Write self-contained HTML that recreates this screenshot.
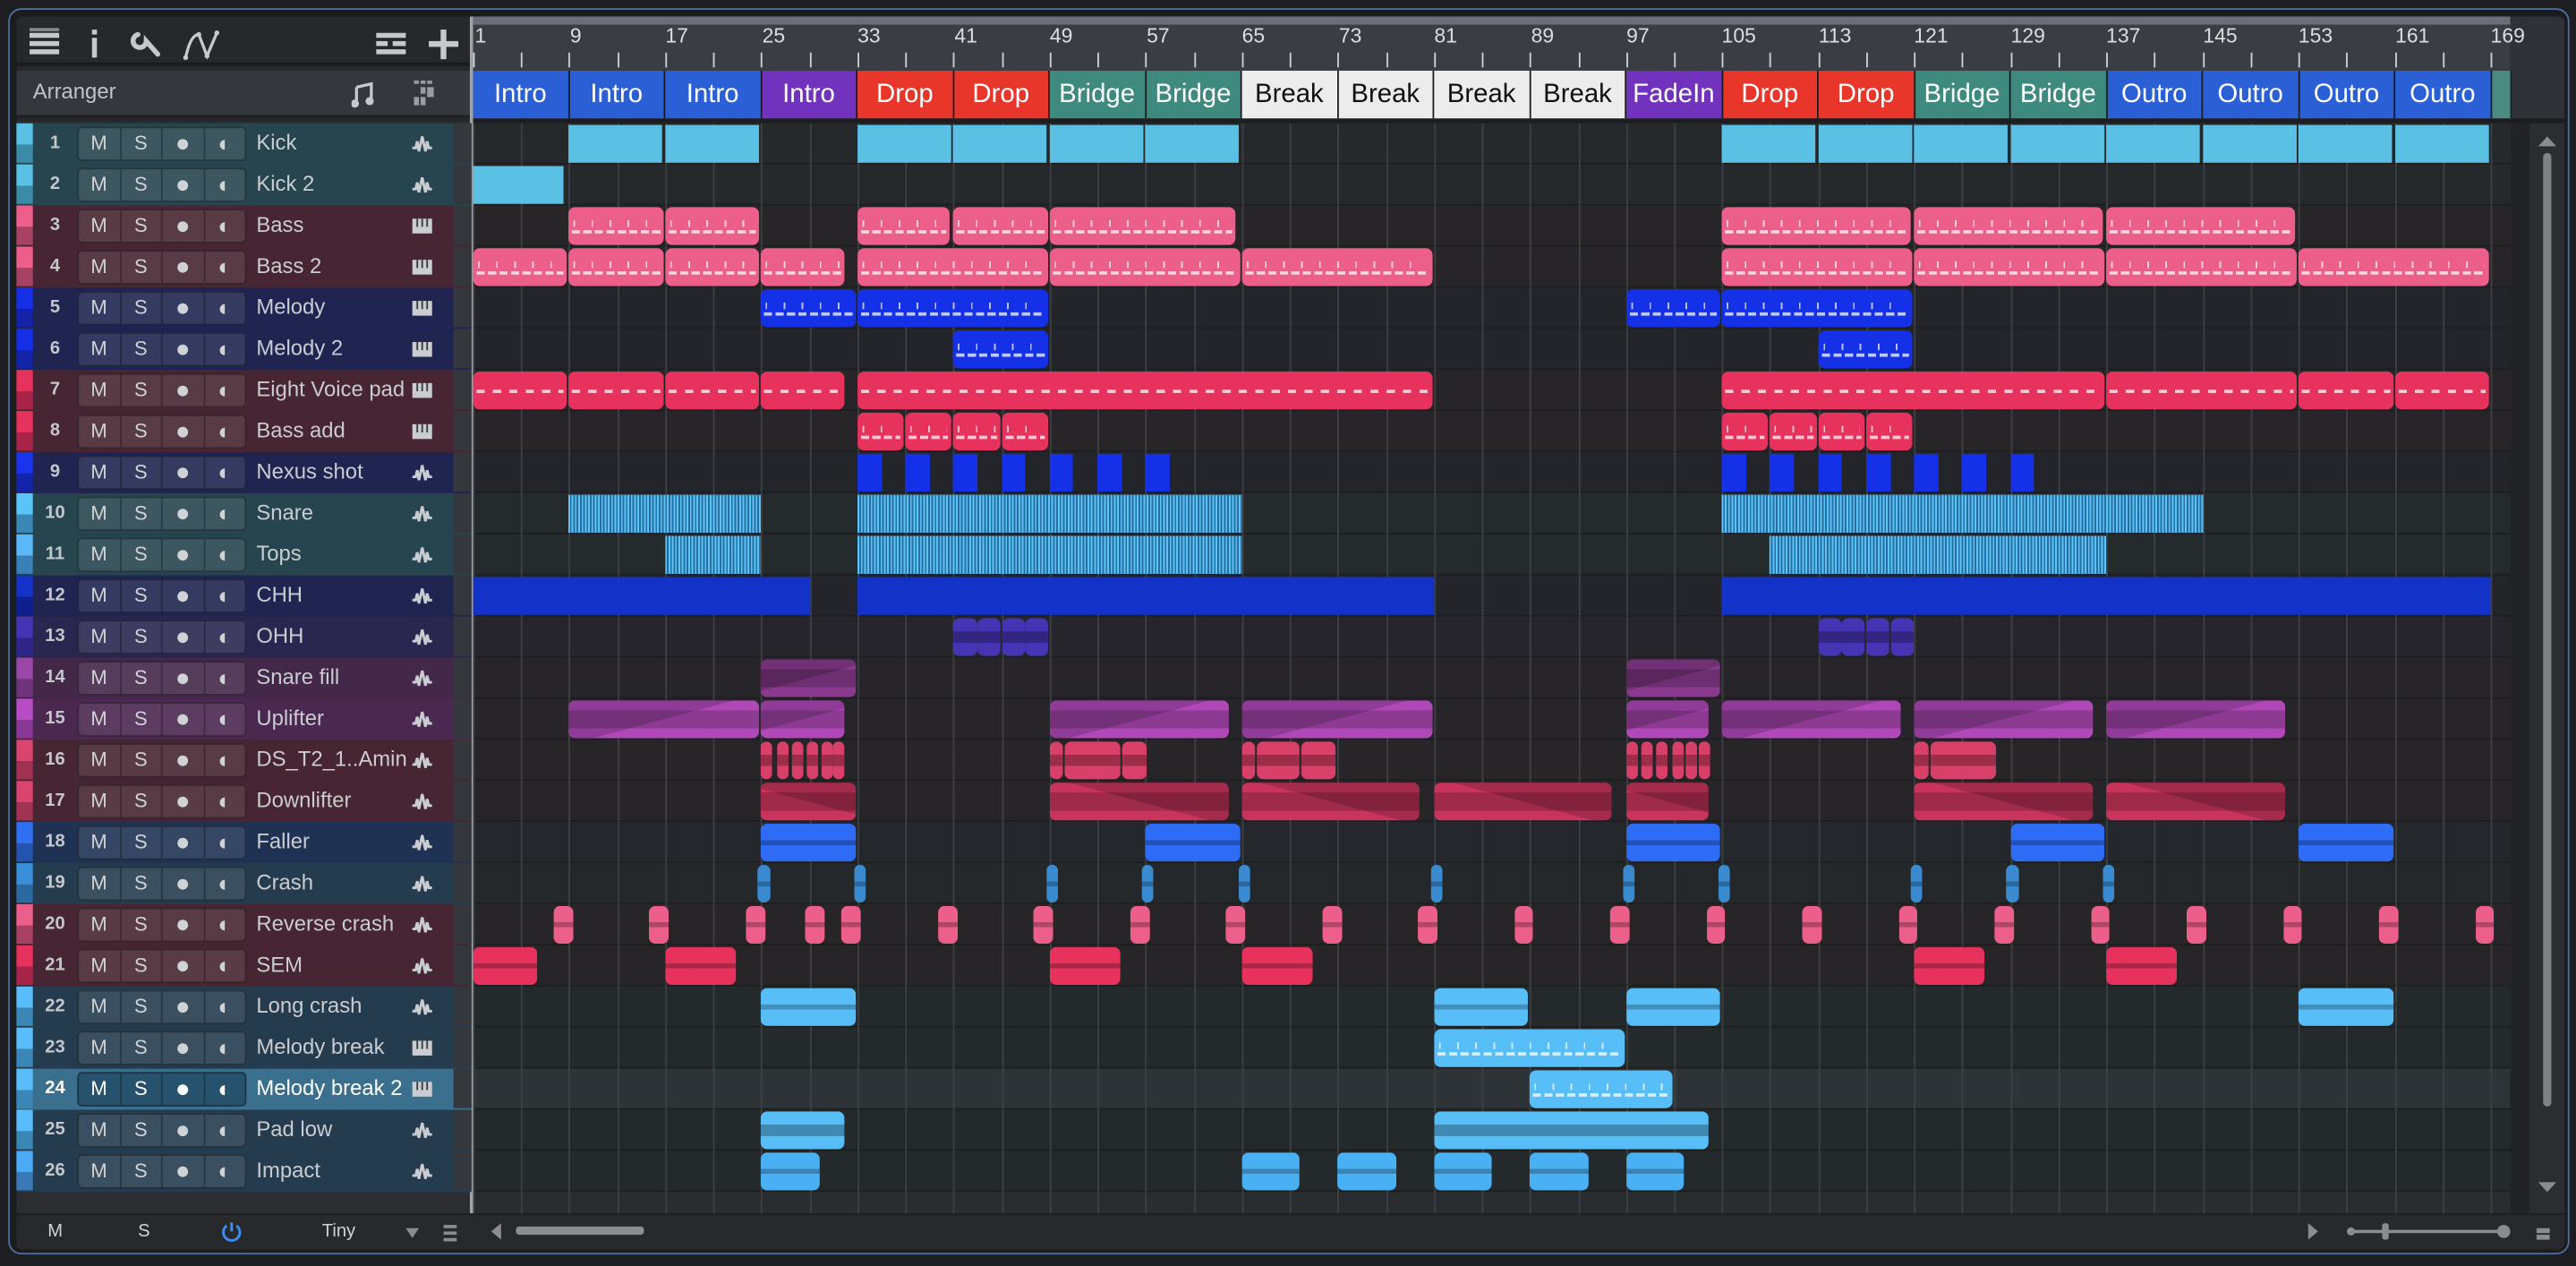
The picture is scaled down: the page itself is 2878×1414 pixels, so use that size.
<!DOCTYPE html>
<html><head><meta charset="utf-8">
<style>
*{margin:0;padding:0;box-sizing:border-box}
html,body{width:2878px;height:1414px;overflow:hidden;background:#1d1e21}
#s{position:absolute;left:0;top:0;width:1568px;height:770px;transform:scale(1.83546,1.83636);transform-origin:0 0;font-family:"Liberation Sans",sans-serif;background:#1d1e21}
.abs{position:absolute}
#win{left:5px;top:5px;width:1559px;height:758px;border:1.5px solid #4d6d9c;border-radius:8px;background:#1b1c1f}
#panel{left:10px;top:10px;width:1551px;height:750px;background:#26282c;border-radius:4px;overflow:hidden}
.tr{position:absolute;left:-1px;width:278px;height:25px}
.tr .cs{position:absolute;left:0;top:0;width:11px;height:13px}
.tr .cs2{position:absolute;left:0;top:13px;width:11px;height:11px}
.tr .num{position:absolute;left:11px;width:27px;top:0;height:24px;line-height:24px;text-align:center;font-size:11px;font-weight:bold;color:#c3c7cc}
.tr .bg{position:absolute;left:38px;top:2px;width:103px;height:21px;border-radius:3px;border:1px solid rgba(0,0,0,.35);background:rgba(255,255,255,.1);display:flex}
.tr .bg span{flex:1;text-align:center;font-size:12px;line-height:19px;color:#d0d3d6;border-right:1px solid rgba(0,0,0,.3)}
.tr .bg span:nth-child(3){font-size:15px}
.tr .bg span:last-child{border-right:0;font-size:14px}
.tr .nm{position:absolute;left:147px;top:0;line-height:24px;font-size:13px;color:#c9ccd0;white-space:nowrap}
.tr .ic{position:absolute;left:241px;top:7px;width:14px;height:11px}
.tr .gap{position:absolute;left:267px;top:0;width:11px;height:24px;background:#34373b}
.teal{background:#26454f}.mar{background:#472532}.nav{background:#1f2450}.ind{background:#29264f}.pur{background:#43284a}.bl2{background:#203254}.sky{background:#243c4e}.sel{background:#3b6f8e}
.lbl{position:absolute;top:33px;height:29px;line-height:29px;text-align:center;color:#fff;font-size:16px;overflow:hidden;white-space:nowrap;border-right:1px solid #1b1c20}
.tk{position:absolute;top:22px;width:1px;height:9px;background:#cfd0d3}
</style></head><body>
<div id="s">
<svg width="0" height="0" style="position:absolute">
<defs>
<symbol id="w" viewBox="0 0 14 11"><path d="M1 8 L3 8 L4 4 L5 10 L7 1 L9 10 L10 4 L11 8 L13 8" fill="none" stroke="#c9ccd0" stroke-width="1.6"/></symbol>
<symbol id="p" viewBox="0 0 14 11"><rect x="1" y="1" width="12" height="9" fill="#c9ccd0"/><path d="M4 1v5M7 1v5M10 1v5" stroke="#3a3a3a" stroke-width="1"/></symbol>
</defs></svg>
<div id="win" class="abs"></div>
<div id="panel" class="abs">
 <div class="abs" style="left:0;top:0;width:277px;height:30px;background:#26282b;border-bottom:2px solid #1a1b1d"></div>
 <svg class="abs" style="left:0;top:0" width="277" height="30">
  <g fill="#c6c8cb"><rect x="8" y="10" width="18" height="3"/><rect x="8" y="15" width="18" height="3"/><rect x="8" y="20" width="18" height="3"/><rect x="8" y="7" width="18" height="2" opacity=".6"/></g>
  <rect x="46" y="13" width="3" height="12" fill="#c6c8cb"/><rect x="46" y="8" width="3" height="3" fill="#c6c8cb"/>
  <path d="M74 11 a4 4 0 1 0 5 4 l7 8" stroke="#c6c8cb" stroke-width="3" fill="none" stroke-linecap="round"/>
  <path d="M103 25 Q106 11 111 11 L116 24 L122 10" stroke="#c6c8cb" stroke-width="1.8" fill="none"/>
  <g fill="#c6c8cb"><circle cx="103" cy="25" r="1.5"/><circle cx="111" cy="11" r="1.5"/><circle cx="116" cy="24" r="1.5"/><circle cx="122" cy="10" r="1.5"/></g>
  <g fill="#c6c8cb"><rect x="219" y="10" width="18" height="3"/><rect x="219" y="15" width="7" height="3"/><rect x="229" y="15" width="8" height="3"/><rect x="219" y="20" width="18" height="3"/></g>
  <rect x="251" y="15" width="18" height="3.5" fill="#c6c8cb"/><rect x="258.2" y="8" width="3.5" height="18" fill="#c6c8cb"/>
 </svg>
 <div class="abs" style="left:0;top:33px;width:277px;height:29px;background:#34373c;border-bottom:2px solid #1f2023"></div>
 <div class="abs" style="left:10px;top:38px;font-size:13px;color:#c0c3c7">Arranger</div>
 <svg class="abs" style="left:204px;top:38px" width="60" height="20">
  <path d="M3 5 L12 3 L12 13" stroke="#c6c8cb" stroke-width="1.8" fill="none"/><path d="M3 5 L3 15" stroke="#c6c8cb" stroke-width="1.8"/>
  <circle cx="2" cy="15" r="2.5" fill="#c6c8cb"/><circle cx="11" cy="13.5" r="2.5" fill="#c6c8cb"/>
  <g fill="#9a9da2"><rect x="38" y="1" width="3" height="2"/><rect x="42" y="1" width="3" height="2"/><rect x="46" y="1" width="3" height="2"/><rect x="42" y="5" width="3" height="4"/><rect x="46" y="5" width="4" height="6"/><rect x="38" y="11" width="3" height="5"/><rect x="42" y="11" width="3" height="5"/></g>
 </svg>
 <div class="abs" style="left:0;top:64px;width:277px;height:664px;background:#2b2d31"></div>
 <div class="abs" style="left:276px;top:0;width:2px;height:728px;background:#9ea3a8"></div>
 <div class="abs" style="left:278px;top:0;width:1240px;height:33px;background:#3a3d44"></div>
 <div class="abs" style="left:278px;top:0;width:1240px;height:5px;background:#6c6f77"></div>
 <div class="abs" style="left:1518px;top:0;width:33px;height:64px;background:#2f3236"></div>
 <div class="abs" style="left:278px;top:62px;width:1273px;height:3px;background:#1d1e21"></div>
 <div class="abs" style="left:278px;top:33px;width:1240px;height:29px;background:#2a2c30"></div>
 <div class="lbl" style="left:278px;width:58.5px;background:#2a5fd6">Intro</div>
 <div class="lbl" style="left:336.5px;width:58.5px;background:#2a5fd6">Intro</div>
 <div class="lbl" style="left:395px;width:58.5px;background:#2a5fd6">Intro</div>
 <div class="lbl" style="left:453.5px;width:58.5px;background:#7132bd">Intro</div>
 <div class="lbl" style="left:512px;width:58.5px;background:#e8362b">Drop</div>
 <div class="lbl" style="left:570.5px;width:58.5px;background:#e8362b">Drop</div>
 <div class="lbl" style="left:629px;width:58.5px;background:#3f8a7e">Bridge</div>
 <div class="lbl" style="left:687.5px;width:58.5px;background:#3f8a7e">Bridge</div>
 <div class="lbl" style="left:746px;width:58.5px;background:#ececec;color:#111">Break</div>
 <div class="lbl" style="left:804.5px;width:58.5px;background:#ececec;color:#111">Break</div>
 <div class="lbl" style="left:863px;width:58.5px;background:#ececec;color:#111">Break</div>
 <div class="lbl" style="left:921.5px;width:58.5px;background:#ececec;color:#111">Break</div>
 <div class="lbl" style="left:980px;width:58.5px;background:#7132bd">FadeIn</div>
 <div class="lbl" style="left:1038.5px;width:58.5px;background:#e8362b">Drop</div>
 <div class="lbl" style="left:1097px;width:58.5px;background:#e8362b">Drop</div>
 <div class="lbl" style="left:1155.5px;width:58.5px;background:#3f8a7e">Bridge</div>
 <div class="lbl" style="left:1214px;width:58.5px;background:#3f8a7e">Bridge</div>
 <div class="lbl" style="left:1272.5px;width:58.5px;background:#2a5fd6">Outro</div>
 <div class="lbl" style="left:1331px;width:58.5px;background:#2a5fd6">Outro</div>
 <div class="lbl" style="left:1389.5px;width:58.5px;background:#2a5fd6">Outro</div>
 <div class="lbl" style="left:1448px;width:58.5px;background:#2a5fd6">Outro</div>
 <div class="lbl" style="left:1506.5px;width:12px;background:#4a8a80"></div>
 <div class="abs" style="left:1518px;top:65px;width:12px;height:663px;background:rgba(0,0,0,.12)"></div>
 <div class="abs" style="left:1530px;top:65px;width:21px;height:663px;background:#2b2d31"></div>
 <svg class="abs" style="left:1530px;top:65px" width="21" height="663"><path d="M5 14 L10.5 8 L16 14Z" fill="#8a8c90"/><rect x="8" y="18" width="5" height="580" rx="2.5" fill="#808286"/><path d="M5 644 L10.5 650 L16 644Z" fill="#8a8c90"/></svg>
 <div class="abs" style="left:0;top:728px;width:1551px;height:22px;background:#27292c;border-top:1px solid #1d1e21"></div>
 <div class="abs" style="left:19px;top:733px;font-size:11px;color:#d0d2d5">M</div>
 <div class="abs" style="left:74px;top:733px;font-size:11px;color:#d0d2d5">S</div>
 <svg class="abs" style="left:124px;top:732px" width="14" height="14"><path d="M4 3.5 A5 5 0 1 0 10 3.5" stroke="#3d8cf0" stroke-width="1.6" fill="none"/><path d="M7 1.5 V7" stroke="#3d8cf0" stroke-width="1.6"/></svg>
 <div class="abs" style="left:186px;top:733px;font-size:11px;color:#d0d2d5">Tiny</div>
 <svg class="abs" style="left:236px;top:733px" width="40" height="14"><path d="M1 4 L9 4 L5 10Z" fill="#8a8c90"/><rect x="24" y="2" width="8" height="2" fill="#8a8c90"/><rect x="24" y="6" width="8" height="2" fill="#8a8c90"/><rect x="24" y="10" width="8" height="2" fill="#8a8c90"/></svg>
 <svg class="abs" style="left:278px;top:729px" width="1273" height="20"><path d="M11 10 L17 5 L17 15Z" fill="#8a8c90"/><rect x="26" y="7" width="78" height="5" rx="2" fill="#8b8d91"/>
 <path d="M1117 5 L1123 10 L1117 15Z" fill="#8a8c90"/><line x1="1143" y1="10" x2="1236" y2="10" stroke="#8a8c90" stroke-width="2"/><circle cx="1143" cy="10" r="2.5" fill="#8a8c90"/><rect x="1162" y="5" width="4" height="10" rx="1.5" fill="#8a8c90"/><circle cx="1236" cy="10" r="4" fill="#8a8c90"/><rect x="1256" y="8" width="8" height="3" fill="#8a8c90"/><rect x="1256" y="12" width="8" height="3" fill="#8a8c90"/></svg>

 <div class="tr teal" style="top:65px"><i class="cs" style="background:#5ac0e4"></i><i class="cs2" style="background:#3b8aa6"></i><b class="num">1</b><div class="bg"><span>M</span><span>S</span><span>●</span><span>◐</span></div><span class="nm">Kick</span><svg class="ic"><use href="#w"/></svg><i class="gap"></i></div>
 <div class="tr teal" style="top:90px"><i class="cs" style="background:#5ac0e4"></i><i class="cs2" style="background:#3b8aa6"></i><b class="num">2</b><div class="bg"><span>M</span><span>S</span><span>●</span><span>◐</span></div><span class="nm">Kick 2</span><svg class="ic"><use href="#w"/></svg><i class="gap"></i></div>
 <div class="tr mar" style="top:115px"><i class="cs" style="background:#ec5f8a"></i><i class="cs2" style="background:#a84264"></i><b class="num">3</b><div class="bg"><span>M</span><span>S</span><span>●</span><span>◐</span></div><span class="nm">Bass</span><svg class="ic"><use href="#p"/></svg><i class="gap"></i></div>
 <div class="tr mar" style="top:140px"><i class="cs" style="background:#ec5f8a"></i><i class="cs2" style="background:#a84264"></i><b class="num">4</b><div class="bg"><span>M</span><span>S</span><span>●</span><span>◐</span></div><span class="nm">Bass 2</span><svg class="ic"><use href="#p"/></svg><i class="gap"></i></div>
 <div class="tr nav" style="top:165px"><i class="cs" style="background:#1530e6"></i><i class="cs2" style="background:#1424a8"></i><b class="num">5</b><div class="bg"><span>M</span><span>S</span><span>●</span><span>◐</span></div><span class="nm">Melody</span><svg class="ic"><use href="#p"/></svg><i class="gap"></i></div>
 <div class="tr nav" style="top:190px"><i class="cs" style="background:#1530e6"></i><i class="cs2" style="background:#1424a8"></i><b class="num">6</b><div class="bg"><span>M</span><span>S</span><span>●</span><span>◐</span></div><span class="nm">Melody 2</span><svg class="ic"><use href="#p"/></svg><i class="gap"></i></div>
 <div class="tr mar" style="top:215px"><i class="cs" style="background:#e8325e"></i><i class="cs2" style="background:#a82448"></i><b class="num">7</b><div class="bg"><span>M</span><span>S</span><span>●</span><span>◐</span></div><span class="nm">Eight Voice pad</span><svg class="ic"><use href="#p"/></svg><i class="gap"></i></div>
 <div class="tr mar" style="top:240px"><i class="cs" style="background:#e8325e"></i><i class="cs2" style="background:#a82448"></i><b class="num">8</b><div class="bg"><span>M</span><span>S</span><span>●</span><span>◐</span></div><span class="nm">Bass add</span><svg class="ic"><use href="#p"/></svg><i class="gap"></i></div>
 <div class="tr nav" style="top:265px"><i class="cs" style="background:#1a34ec"></i><i class="cs2" style="background:#1424a8"></i><b class="num">9</b><div class="bg"><span>M</span><span>S</span><span>●</span><span>◐</span></div><span class="nm">Nexus shot</span><svg class="ic"><use href="#w"/></svg><i class="gap"></i></div>
 <div class="tr teal" style="top:290px"><i class="cs" style="background:#5ac4f8"></i><i class="cs2" style="background:#3a86b6"></i><b class="num">10</b><div class="bg"><span>M</span><span>S</span><span>●</span><span>◐</span></div><span class="nm">Snare</span><svg class="ic"><use href="#w"/></svg><i class="gap"></i></div>
 <div class="tr teal" style="top:315px"><i class="cs" style="background:#5ab8f8"></i><i class="cs2" style="background:#3a80b6"></i><b class="num">11</b><div class="bg"><span>M</span><span>S</span><span>●</span><span>◐</span></div><span class="nm">Tops</span><svg class="ic"><use href="#w"/></svg><i class="gap"></i></div>
 <div class="tr nav" style="top:340px"><i class="cs" style="background:#1232c8"></i><i class="cs2" style="background:#0e2090"></i><b class="num">12</b><div class="bg"><span>M</span><span>S</span><span>●</span><span>◐</span></div><span class="nm">CHH</span><svg class="ic"><use href="#w"/></svg><i class="gap"></i></div>
 <div class="tr ind" style="top:365px"><i class="cs" style="background:#4534b4"></i><i class="cs2" style="background:#30268a"></i><b class="num">13</b><div class="bg"><span>M</span><span>S</span><span>●</span><span>◐</span></div><span class="nm">OHH</span><svg class="ic"><use href="#w"/></svg><i class="gap"></i></div>
 <div class="tr pur" style="top:390px"><i class="cs" style="background:#9a48a8"></i><i class="cs2" style="background:#70347c"></i><b class="num">14</b><div class="bg"><span>M</span><span>S</span><span>●</span><span>◐</span></div><span class="nm">Snare fill</span><svg class="ic"><use href="#w"/></svg><i class="gap"></i></div>
 <div class="tr pur" style="top:415px;background:#4a2850"><i class="cs" style="background:#b84cc4"></i><i class="cs2" style="background:#8a3896"></i><b class="num">15</b><div class="bg"><span>M</span><span>S</span><span>●</span><span>◐</span></div><span class="nm">Uplifter</span><svg class="ic"><use href="#w"/></svg><i class="gap"></i></div>
 <div class="tr mar" style="top:440px"><i class="cs" style="background:#dc4470"></i><i class="cs2" style="background:#a23252"></i><b class="num">16</b><div class="bg"><span>M</span><span>S</span><span>●</span><span>◐</span></div><span class="nm">DS_T2_1..Amin</span><svg class="ic"><use href="#w"/></svg><i class="gap"></i></div>
 <div class="tr mar" style="top:465px"><i class="cs" style="background:#dc4470"></i><i class="cs2" style="background:#a23252"></i><b class="num">17</b><div class="bg"><span>M</span><span>S</span><span>●</span><span>◐</span></div><span class="nm">Downlifter</span><svg class="ic"><use href="#w"/></svg><i class="gap"></i></div>
 <div class="tr bl2" style="top:490px"><i class="cs" style="background:#3070f0"></i><i class="cs2" style="background:#2454b0"></i><b class="num">18</b><div class="bg"><span>M</span><span>S</span><span>●</span><span>◐</span></div><span class="nm">Faller</span><svg class="ic"><use href="#w"/></svg><i class="gap"></i></div>
 <div class="tr sky" style="top:515px"><i class="cs" style="background:#3a90d8"></i><i class="cs2" style="background:#2a6aa0"></i><b class="num">19</b><div class="bg"><span>M</span><span>S</span><span>●</span><span>◐</span></div><span class="nm">Crash</span><svg class="ic"><use href="#w"/></svg><i class="gap"></i></div>
 <div class="tr mar" style="top:540px"><i class="cs" style="background:#ec5f8a"></i><i class="cs2" style="background:#a84264"></i><b class="num">20</b><div class="bg"><span>M</span><span>S</span><span>●</span><span>◐</span></div><span class="nm">Reverse crash</span><svg class="ic"><use href="#w"/></svg><i class="gap"></i></div>
 <div class="tr mar" style="top:565px"><i class="cs" style="background:#e8325e"></i><i class="cs2" style="background:#a82448"></i><b class="num">21</b><div class="bg"><span>M</span><span>S</span><span>●</span><span>◐</span></div><span class="nm">SEM</span><svg class="ic"><use href="#w"/></svg><i class="gap"></i></div>
 <div class="tr sky" style="top:590px"><i class="cs" style="background:#5abcf8"></i><i class="cs2" style="background:#3a86b6"></i><b class="num">22</b><div class="bg"><span>M</span><span>S</span><span>●</span><span>◐</span></div><span class="nm">Long crash</span><svg class="ic"><use href="#w"/></svg><i class="gap"></i></div>
 <div class="tr sky" style="top:615px"><i class="cs" style="background:#5abcf8"></i><i class="cs2" style="background:#3a86b6"></i><b class="num">23</b><div class="bg"><span>M</span><span>S</span><span>●</span><span>◐</span></div><span class="nm">Melody break</span><svg class="ic"><use href="#p"/></svg><i class="gap"></i></div>
 <div class="tr sel" style="top:640px"><i class="cs" style="background:#5abcf8"></i><i class="cs2" style="background:#3a86b6"></i><b class="num" style="color:#fff">24</b><div class="bg" style="background:rgba(0,30,50,.35)"><span style="color:#fff">M</span><span style="color:#fff">S</span><span style="color:#fff">●</span><span style="color:#fff">◐</span></div><span class="nm" style="color:#fff">Melody break 2</span><svg class="ic"><use href="#p"/></svg><i class="gap"></i></div>
 <div class="tr sky" style="top:665px"><i class="cs" style="background:#5abcf8"></i><i class="cs2" style="background:#3a86b6"></i><b class="num">25</b><div class="bg"><span>M</span><span>S</span><span>●</span><span>◐</span></div><span class="nm">Pad low</span><svg class="ic"><use href="#w"/></svg><i class="gap"></i></div>
 <div class="tr sky" style="top:690px"><i class="cs" style="background:#4aaaf4"></i><i class="cs2" style="background:#3a7ab6"></i><b class="num">26</b><div class="bg"><span>M</span><span>S</span><span>●</span><span>◐</span></div><span class="nm">Impact</span><svg class="ic"><use href="#w"/></svg><i class="gap"></i></div>
</div>
</div>
<script>
(function(){
var P=document.getElementById('panel');
var O=10;
function X(b){return 288+(b-1)*7.31-O;}
function el(css,cls){var d=document.createElement('div');d.className=cls||'abs';d.style.cssText=css;P.insertBefore(d,P.querySelector('.tr'));return d;}
for(var b=1;b<=173;b+=4){var x=X(b);if(x>1518)break;el('left:'+x+'px','tk');}
var tint=['#25292b','#25292b','#282528','#282528','#24252b','#24252b','#282528','#282528','#24252b','#252a2c','#252a2c','#24252b','#25252b','#27252a','#27252a','#282528','#282528','#24272c','#24282b','#282528','#282528','#24292c','#24292c','#2e3337','#24292c','#24292c'];
for(var i=0;i<26;i++){el('left:278px;top:'+(65+i*25)+'px;width:1240px;height:25px;background:'+tint[i]+';border-bottom:1px solid #1c1e20');}
el('left:278px;top:715px;width:1240px;height:13px;background:#2a2d30');
for(var b=1;b<=169;b+=4){el('left:'+X(b)+'px;top:65px;width:1px;height:663px;background:#3c4044');}
function C(r,x1,x2,col,t){var top=65+(r-1)*25+1;var rad=(t=='k')?0:4;
 var d=el('left:'+(x1-O)+'px;top:'+top+'px;width:'+(x2-x1)+'px;height:23px;border-radius:'+rad+'px;background:'+col+';overflow:hidden');
 if(t=='m'){el('left:'+(x1-O+2)+'px;top:'+(top+14)+'px;width:'+(x2-x1-4)+'px;height:2px;background:repeating-linear-gradient(90deg,rgba(255,255,255,.75) 0 5px,transparent 5px 7px)');
  el('left:'+(x1-O+3)+'px;top:'+(top+8)+'px;width:'+(x2-x1-6)+'px;height:4px;background:repeating-linear-gradient(90deg,rgba(255,255,255,.7) 0 1px,transparent 1px 11px)');}
 if(t=='d'){el('left:'+(x1-O+2)+'px;top:'+(top+11)+'px;width:'+(x2-x1-4)+'px;height:2px;background:repeating-linear-gradient(90deg,rgba(255,255,255,.75) 0 5px,transparent 5px 10px)');}
 if(t=='a'){d.style.backgroundImage='linear-gradient(transparent 10px,rgba(0,0,0,.25) 10px 13px,transparent 13px)';}
 if(t=='u'){d.style.backgroundImage='linear-gradient(165deg,rgba(0,0,0,.18) 50%,transparent 50%),linear-gradient(transparent 6px,rgba(0,0,0,.2) 6px 17px,transparent 17px)';}
 if(t=='dn'){d.style.backgroundImage='linear-gradient(15deg,transparent 50%,rgba(0,0,0,.18) 50%),linear-gradient(transparent 6px,rgba(0,0,0,.2) 6px 17px,transparent 17px)';}
 if(t=='s'){d.style.backgroundImage='repeating-linear-gradient(90deg,#5ac4f8 0 1px,#2a6ea0 1px 2px)';d.style.borderRadius='0';}
 if(t=='w'){d.style.backgroundImage='linear-gradient(transparent 8px,rgba(0,0,0,.28) 8px 15px,transparent 15px)';}
}
function B(r,b1,b2,col,t,g){g=g==null?1:g;C(r,X(b1)+O,X(b2)+O-g,col,t);}
var KC='#5ac0e4';
[[9,17],[17,25],[33,41],[41,49],[49,57],[57,65],[105,113],[113,121],[121,129],[129,137],[137,145],[145,153],[153,161],[161,169]].forEach(function(a){B(1,a[0],a[1],KC,'k',1.5);});
B(2,1,8.6,KC,'k');
var PK='#ec5f8a';
[[9,17],[17,25],[33,40.8],[41,49],[49,64.6],[105,120.8],[121,136.8],[137,152.8]].forEach(function(a){B(3,a[0],a[1],PK,'m');});
[[1,9],[9,17],[17,25],[25,32],[33,49],[49,65],[65,81],[105,121],[121,137],[137,153],[153,169]].forEach(function(a){B(4,a[0],a[1],PK,'m');});
var BL='#1531e8';
[[25,33],[33,49],[97,105],[105,121]].forEach(function(a){B(5,a[0],a[1],BL,'m');});
[[41,49],[113,121]].forEach(function(a){B(6,a[0],a[1],BL,'m');});
var RD='#e8325e';
[[1,9],[9,17],[17,25],[25,32],[33,81],[105,137],[137,153],[153,161],[161,169]].forEach(function(a){B(7,a[0],a[1],RD,'d');});
[[33,37],[37,41],[41,45],[45,49],[105,109],[109,113],[113,117],[117,121]].forEach(function(a){B(8,a[0],a[1],RD,'m');});
[33,37,41,45,49,53,57,105,109,113,117,121,125,129].forEach(function(b){B(9,b,b+2,BL,'k',0);});
B(10,9,25,'#5ac4f8','s',0);B(10,33,65,'#5ac4f8','s',0);B(10,105,145,'#5ac4f8','s',0);
B(11,17,25,'#5ab8f8','s',0);B(11,33,65,'#5ab8f8','s',0);B(11,109,137,'#5ab8f8','s',0);
B(12,1,29,'#1232c8','k',0);B(12,33,81,'#1232c8','k',0);B(12,105,169,'#1232c8','k',0);
[41,43,45,47,113,115,117,119].forEach(function(b){B(13,b,b+2,'#4534b4','w',0.5);});
B(14,25,33,'#8a3a8e','u');B(14,97,105,'#8a3a8e','u');
var UP='#b048b8';
[[9,25],[25,32],[49,64],[65,81],[97,104],[105,120],[121,136],[137,152]].forEach(function(a){B(15,a[0],a[1],UP,'u');});
var DS='#d8406a';
[25,26.3,27.5,28.8,30,31].forEach(function(b){B(16,b,b+1,DS,'w',0.3);});
B(16,49,50.3,DS,'w');B(16,50.3,55,DS,'w');B(16,55,57.2,DS,'w');
B(16,65,66.3,DS,'w');B(16,66.3,70,DS,'w');B(16,70,73,DS,'w');
[97,98.3,99.5,100.8,102,103].forEach(function(b){B(16,b,b+1,DS,'w',0.3);});
B(16,121,122.3,DS,'w');B(16,122.3,128,DS,'w');
var DN='#c8345c';
[[25,33],[49,64],[65,80],[81,96],[97,104],[121,136],[137,152]].forEach(function(a){B(17,a[0],a[1],DN,'dn');});
var FL='#2f6cf5';
[[25,33],[57,65],[97,105],[129,137],[153,161]].forEach(function(a){B(18,a[0],a[1],FL,'a');});
[25,33,49,57,65,81,97,105,121,129,137].forEach(function(b){B(19,b-0.3,b+0.7,'#3a8ad0','a',0);});
[8,16,24,29,32,40,48,56,64,72,80,88,96,104,112,120,128,136,144,152,160,168].forEach(function(b){B(20,b-0.3,b+1.3,PK,'a',0);});
[[1,6.5],[17,23],[49,55],[65,71],[121,127],[137,143]].forEach(function(a){B(21,a[0],a[1],RD,'a');});
var LC='#58bef8';
[[25,33],[81,89],[97,105],[153,161]].forEach(function(a){B(22,a[0],a[1],LC,'a');});
B(23,81,97,LC,'m');B(24,89,101,LC,'m');
B(25,25,32,LC,'w');B(25,81,104,LC,'w');
[[25,30],[65,70],[73,78],[81,86],[89,94],[97,102]].forEach(function(a){B(26,a[0],a[1],'#4ab0f4','a');});
})();
</script>
<div style="position:absolute;left:0;top:0;width:1568px;height:40px;transform:scale(1.83546,1.83636);transform-origin:0 0;font-family:'Liberation Sans',sans-serif;font-size:12.5px;color:#dcdde0;pointer-events:none">
<span style="position:absolute;left:289px;top:15px">1</span><span style="position:absolute;left:347px;top:15px">9</span><span style="position:absolute;left:405px;top:15px">17</span><span style="position:absolute;left:464px;top:15px">25</span><span style="position:absolute;left:522px;top:15px">33</span><span style="position:absolute;left:581px;top:15px">41</span><span style="position:absolute;left:639px;top:15px">49</span><span style="position:absolute;left:698px;top:15px">57</span><span style="position:absolute;left:756px;top:15px">65</span><span style="position:absolute;left:815px;top:15px">73</span><span style="position:absolute;left:873px;top:15px">81</span><span style="position:absolute;left:932px;top:15px">89</span><span style="position:absolute;left:990px;top:15px">97</span><span style="position:absolute;left:1048px;top:15px">105</span><span style="position:absolute;left:1107px;top:15px">113</span><span style="position:absolute;left:1165px;top:15px">121</span><span style="position:absolute;left:1224px;top:15px">129</span><span style="position:absolute;left:1282px;top:15px">137</span><span style="position:absolute;left:1341px;top:15px">145</span><span style="position:absolute;left:1399px;top:15px">153</span><span style="position:absolute;left:1458px;top:15px">161</span><span style="position:absolute;left:1516px;top:15px">169</span>
</div>
</body></html>
